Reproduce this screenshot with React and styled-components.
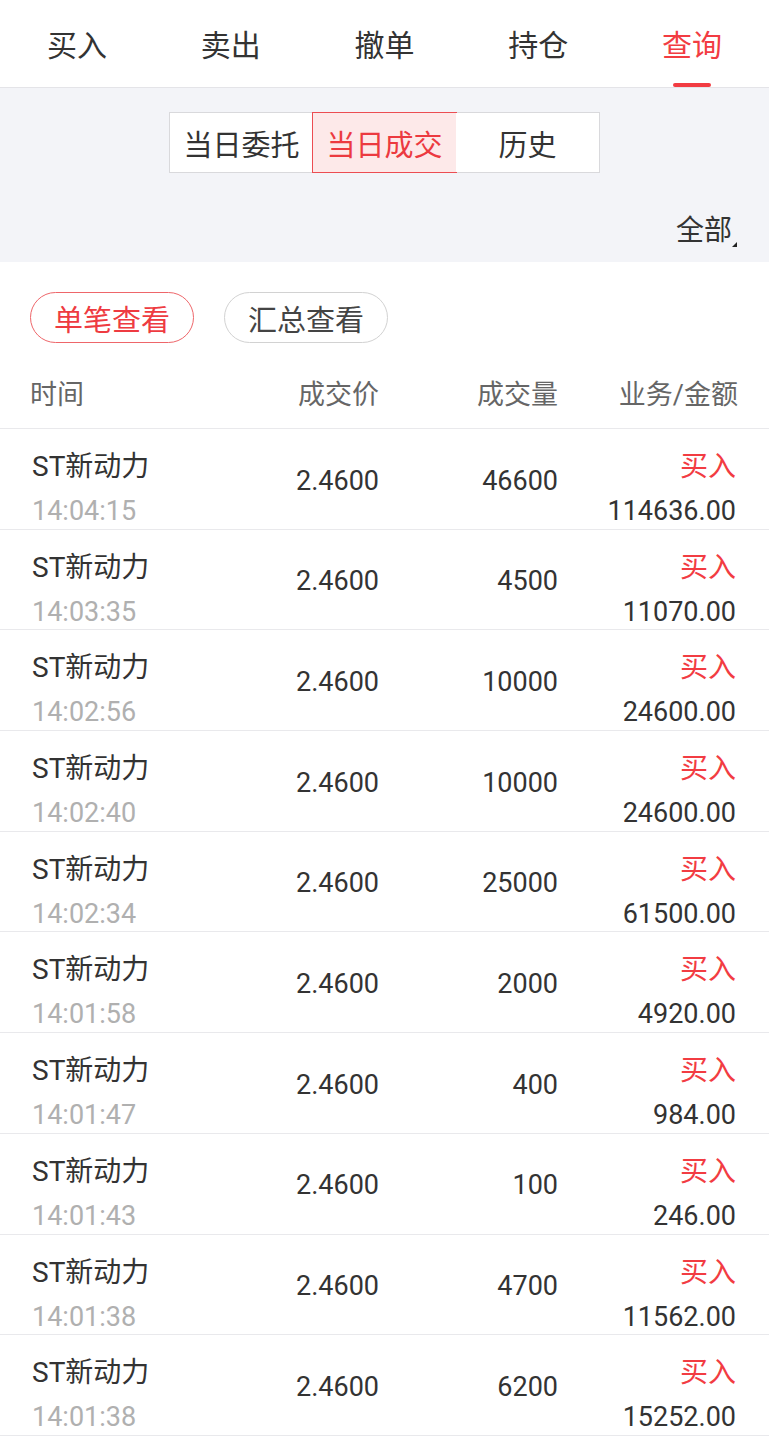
import React, { useState } from 'react';
import styled, { createGlobalStyle } from 'styled-components';

const GlobalStyle = createGlobalStyle`
  html, body {
    margin: 0;
    padding: 0;
    background: #ffffff;
    font-family: Roboto, "Noto Sans CJK SC", sans-serif;
    color: #333;
  }
  * {
    box-sizing: border-box;
  }
`;

const Page = styled.div`
  width: 769px;
  min-height: 1443px;
  background: #fff;
`;

const TabBar = styled.div`
  display: flex;
  height: 88px;
  border-bottom: 1px solid #e4e4e8;
  background: #fff;
`;

const Tab = styled.div`
  flex: 1;
  display: flex;
  flex-direction: column;
  align-items: center;
  justify-content: flex-end;
  font-size: 30px;
  color: ${(p) => (p.$active ? '#f23c42' : '#333')};
`;

const TabLabel = styled.span`
  line-height: 40px;
  margin-bottom: 17px;
`;

const Underline = styled.span`
  width: 38px;
  height: 4px;
  border-radius: 2px;
  background: ${(p) => (p.$show ? '#f23c42' : 'transparent')};
`;

const FilterArea = styled.div`
  background: #f3f4f8;
  padding-top: 24px;
`;

const Segmented = styled.div`
  display: flex;
  width: 431px;
  margin: 0 auto;
  background: #fff;
  border: 1px solid #d9d9dc;
`;

const Segment = styled.div`
  flex: 1;
  height: 59px;
  display: flex;
  align-items: center;
  justify-content: center;
  font-size: 29px;
  color: ${(p) => (p.$active ? '#ec3a40' : '#333')};
  background: ${(p) => (p.$active ? '#fde9e9' : '#fff')};
  outline: ${(p) => (p.$active ? '1px solid #ec4d52' : 'none')};
`;

const ScopeRow = styled.div`
  display: flex;
  justify-content: flex-end;
  padding: 40px 32px 13px 0;
`;

const Scope = styled.div`
  display: flex;
  align-items: flex-end;
  font-size: 28px;
  line-height: 36px;
  color: #333;
`;

const Corner = styled.span`
  width: 0;
  height: 0;
  margin-bottom: 2px;
  border-left: 5px solid transparent;
  border-bottom: 5px solid #222;
`;

const PillRow = styled.div`
  display: flex;
  gap: 30px;
  padding: 30px 30px 0;
`;

const Pill = styled.div`
  width: 164px;
  height: 51px;
  border-radius: 26px;
  display: flex;
  align-items: center;
  justify-content: center;
  font-size: 29px;
  color: ${(p) => (p.$active ? '#ee3b41' : '#444')};
  border: 1px solid ${(p) => (p.$active ? '#ee666a' : '#d2d2d2')};
`;

const Grid = styled.div`
  display: grid;
  grid-template-columns: 1fr 150px 179px 180px;
  padding: 0 31px 0 30px;
  border-bottom: 1px solid #e9e9ec;
`;

const HeaderRow = styled(Grid)`
  padding-top: 36px;
  padding-bottom: 17px;
  font-size: 27px;
  line-height: 32px;
  color: #666;
`;

const HeadCell = styled.div`
  text-align: ${(p) => (p.$left ? 'left' : 'right')};
`;

const Row = styled(Grid)`
  height: 100.7px;
`;

const NameCell = styled.div`
  display: flex;
  flex-direction: column;
  padding: 20px 0 0 2px;
`;

const Name = styled.span`
  font-size: 28px;
  line-height: 36px;
  color: #333;
`;

const Time = styled.span`
  font-size: 27px;
  line-height: 36px;
  margin-top: 8px;
  color: #b0b0b0;
`;

const NumCell = styled.div`
  align-self: center;
  text-align: right;
  font-size: 27px;
  line-height: 36px;
  color: #333;
  padding-top: 3px;
`;

const TradeCell = styled.div`
  display: flex;
  flex-direction: column;
  align-items: flex-end;
  padding: 20px 2px 0 0;
`;

const Side = styled.span`
  font-size: 28px;
  line-height: 36px;
  color: #f23c42;
`;

const Amount = styled.span`
  font-size: 27px;
  line-height: 36px;
  margin-top: 8px;
  color: #333;
`;

const tabs = ['买入', '卖出', '撤单', '持仓', '查询'];
const segments = ['当日委托', '当日成交', '历史'];

const trades = [
  { time: '14:04:15', qty: '46600', amount: '114636.00' },
  { time: '14:03:35', qty: '4500', amount: '11070.00' },
  { time: '14:02:56', qty: '10000', amount: '24600.00' },
  { time: '14:02:40', qty: '10000', amount: '24600.00' },
  { time: '14:02:34', qty: '25000', amount: '61500.00' },
  { time: '14:01:58', qty: '2000', amount: '4920.00' },
  { time: '14:01:47', qty: '400', amount: '984.00' },
  { time: '14:01:43', qty: '100', amount: '246.00' },
  { time: '14:01:38', qty: '4700', amount: '11562.00' },
  { time: '14:01:38', qty: '6200', amount: '15252.00' },
];

export default function App() {
  const [tab, setTab] = useState(4);
  const [segment, setSegment] = useState(1);
  const [mode, setMode] = useState('single');

  return (
    <Page>
      <GlobalStyle />
      <TabBar>
        {tabs.map((t, i) => (
          <Tab key={t} $active={i === tab} onClick={() => setTab(i)}>
            <TabLabel>{t}</TabLabel>
            <Underline $show={i === tab} />
          </Tab>
        ))}
      </TabBar>

      <FilterArea>
        <Segmented>
          {segments.map((s, i) => (
            <Segment key={s} $active={i === segment} onClick={() => setSegment(i)}>
              {s}
            </Segment>
          ))}
        </Segmented>
        <ScopeRow>
          <Scope>
            全部
            <Corner />
          </Scope>
        </ScopeRow>
      </FilterArea>

      <PillRow>
        <Pill $active={mode === 'single'} onClick={() => setMode('single')}>
          单笔查看
        </Pill>
        <Pill $active={mode === 'summary'} onClick={() => setMode('summary')}>
          汇总查看
        </Pill>
      </PillRow>

      <HeaderRow>
        <HeadCell $left>时间</HeadCell>
        <HeadCell>成交价</HeadCell>
        <HeadCell>成交量</HeadCell>
        <HeadCell>业务/金额</HeadCell>
      </HeaderRow>

      {trades.map((t, i) => (
        <Row key={i}>
          <NameCell>
            <Name>ST新动力</Name>
            <Time>{t.time}</Time>
          </NameCell>
          <NumCell>2.4600</NumCell>
          <NumCell>{t.qty}</NumCell>
          <TradeCell>
            <Side>买入</Side>
            <Amount>{t.amount}</Amount>
          </TradeCell>
        </Row>
      ))}
    </Page>
  );
}
